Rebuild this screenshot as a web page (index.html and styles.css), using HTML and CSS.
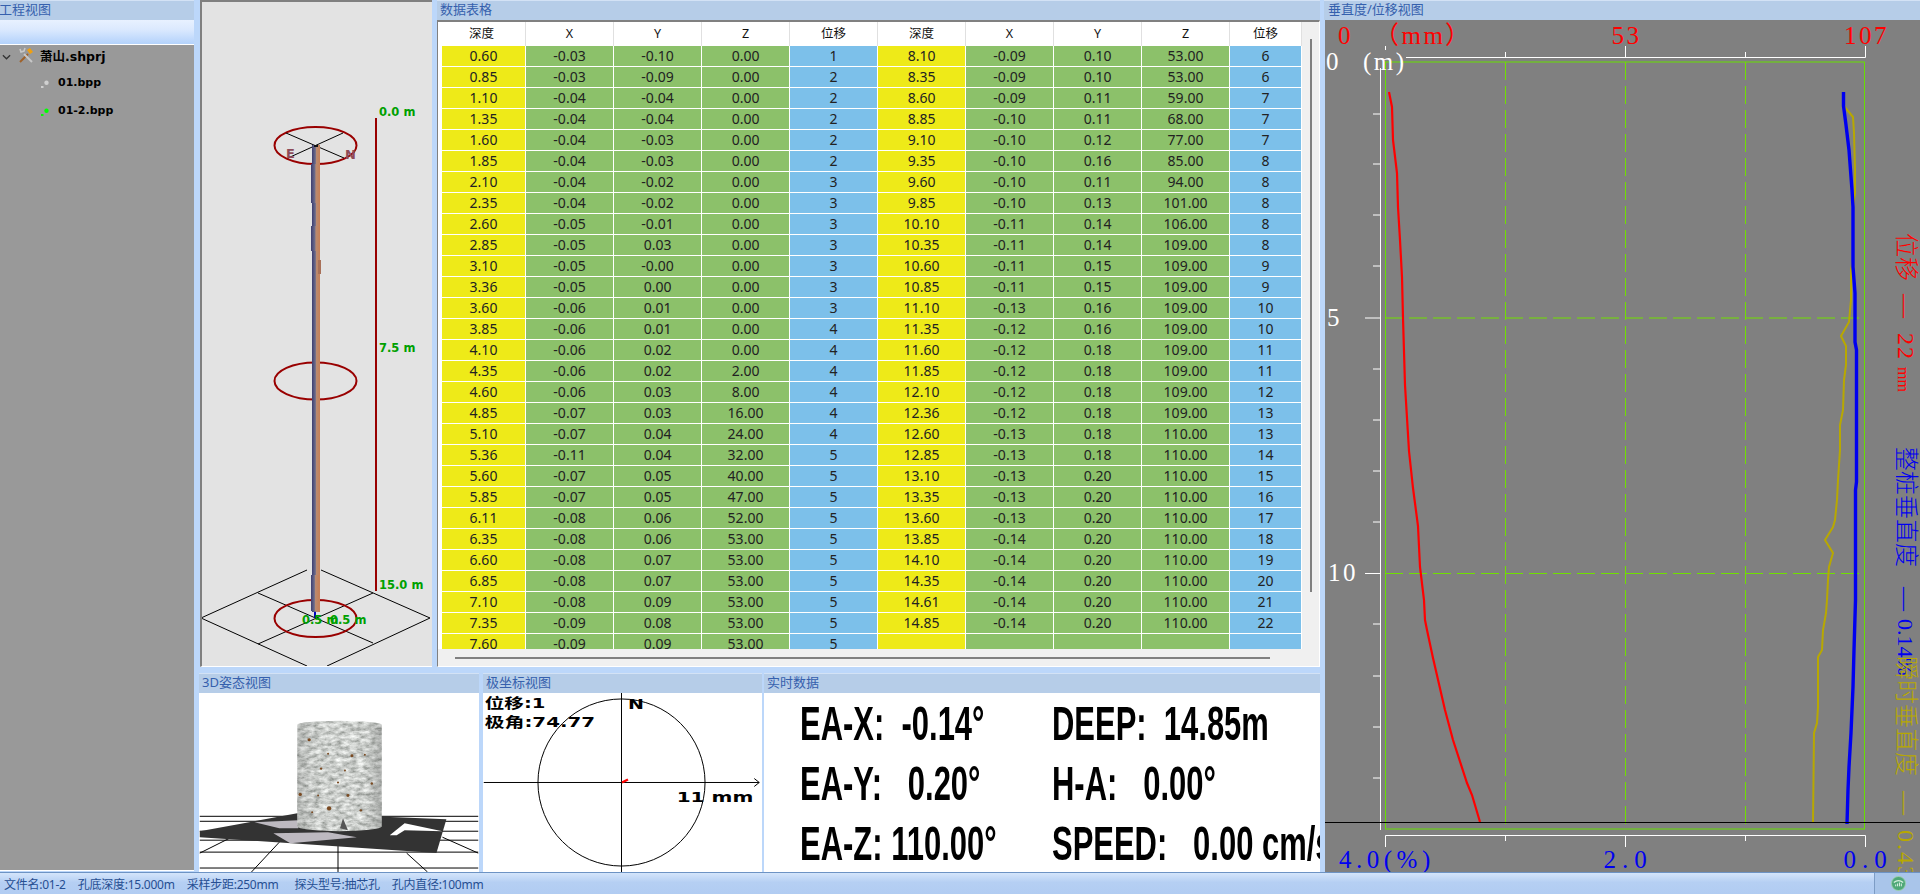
FILE: index.html
```html
<!DOCTYPE html>
<html lang="zh-CN">
<head>
<meta charset="utf-8">
<title>数据视图</title>
<link rel="stylesheet" href="styles.css">
</head>
<body>
<div class="app">
  <div class="workspace">
    <aside class="tree-panel">
      <div class="head tree-head">工程视图</div>
      <div class="toolbar"></div>
      <div class="tree">
        <div class="node root">
          <svg class="chev" viewBox="0 0 10 6"><path d="M1 1l4 4 4-4" fill="none" stroke="#333" stroke-width="1.4"/></svg>
          <svg class="tools" viewBox="0 0 16 16"><path d="M2 15L10 7" stroke="#a0622a" stroke-width="2"/><path d="M9 3l3-2 3 4-3 2z" fill="#f0a010"/><path d="M14 15L6 7" stroke="#c8c8c8" stroke-width="2"/><path d="M2 2l1 3 3-1 1-3" fill="none" stroke="#c8c8c8" stroke-width="1.6"/></svg>
          <span>萧山.shprj</span>
        </div>
        <div class="node leaf"><svg class="dot" viewBox="0 0 8 8"><circle cx="5.5" cy="2.8" r="2.2" fill="#d0d0d0"/><rect x="0" y="6" width="2.5" height="2" fill="#d0d0d0"/></svg><span>01.bpp</span></div>
        <div class="node leaf"><svg class="dot" viewBox="0 0 8 8"><circle cx="5.5" cy="2.8" r="2.2" fill="#0f0"/><rect x="0" y="6" width="2.5" height="2" fill="#0f0"/></svg><span>01-2.bpp</span></div>
      </div>
    </aside>

    <main class="center">
      <div class="top-row">
        <section class="pillar-panel">
          <svg class="pillar-svg" viewBox="202 2 230 665">
            <defs>
              <linearGradient id="pipe" x1="0" x2="1" y1="0" y2="0">
                <stop offset="0" stop-color="#3e3e70"/><stop offset=".42" stop-color="#6c6c8c"/><stop offset=".55" stop-color="#b98a70"/><stop offset="1" stop-color="#c67f58"/>
              </linearGradient>
            </defs>
            <g class="thin">
              <path d="M201 618L307 570M321 570L430 618L327 666M307 666L201 618"/>
              <path d="M258 593L373 643M373 593L258 644"/>
            </g>
            <ellipse class="ring" cx="315.5" cy="145.5" rx="41" ry="18.5"/>
            <ellipse class="ring" cx="315.5" cy="381" rx="41" ry="18.5"/>
            <ellipse class="ring" cx="315.5" cy="618.5" rx="41" ry="18.5"/>
            <g class="thin"><path d="M286 133L344 158M343 133L288 158"/></g>
            <text class="compass" x="286" y="158">E</text>
            <text class="compass" x="345" y="159">N</text>
            <rect x="312" y="145" width="8" height="467" fill="url(#pipe)"/>
            <rect x="311" y="164" width="9" height="28" fill="url(#pipe)"/>
            <rect x="311" y="192" width="9" height="11" fill="url(#pipe)"/>
            <rect x="311" y="226" width="9" height="25" fill="url(#pipe)"/>
            <rect x="318" y="260" width="3" height="14" fill="#a87058"/>
            <rect x="311" y="575" width="8" height="36" fill="url(#pipe)"/>
            <rect x="314" y="145" width="4" height="2" fill="#111"/>
            <rect x="314" y="612" width="2" height="6" fill="#0000c0"/>
            <line class="scale" x1="376" y1="118" x2="376" y2="591"/>
            <text class="mark" x="379" y="116">0.0 m</text>
            <text class="mark" x="379" y="352">7.5 m</text>
            <text class="mark" x="379" y="589">15.0 m</text>
            <text class="mark" x="302" y="624">0.5 m</text>
            <text class="mark" x="330" y="624">0.5 m</text>
          </svg>
        </section>

        <section class="table-panel">
          <div class="head">数据表格</div>
          <div class="table-body">
            <div class="table-row-wrap">
              <div class="table-clip">
                <table class="data">
                  <colgroup><col class="c-strip"><col class="c-first"><col class="c-std" span="8"><col class="c-last"></colgroup>
                  <thead><tr><th colspan="2">深度</th><th>X</th><th>Y</th><th>Z</th><th>位移</th><th>深度</th><th>X</th><th>Y</th><th>Z</th><th>位移</th></tr></thead>
                  <tbody>
<tr><th></th><td>0.60</td><td>-0.03</td><td>-0.10</td><td>0.00</td><td>1</td><td>8.10</td><td>-0.09</td><td>0.10</td><td>53.00</td><td>6</td></tr>
<tr><th></th><td>0.85</td><td>-0.03</td><td>-0.09</td><td>0.00</td><td>2</td><td>8.35</td><td>-0.09</td><td>0.10</td><td>53.00</td><td>6</td></tr>
<tr><th></th><td>1.10</td><td>-0.04</td><td>-0.04</td><td>0.00</td><td>2</td><td>8.60</td><td>-0.09</td><td>0.11</td><td>59.00</td><td>7</td></tr>
<tr><th></th><td>1.35</td><td>-0.04</td><td>-0.04</td><td>0.00</td><td>2</td><td>8.85</td><td>-0.10</td><td>0.11</td><td>68.00</td><td>7</td></tr>
<tr><th></th><td>1.60</td><td>-0.04</td><td>-0.03</td><td>0.00</td><td>2</td><td>9.10</td><td>-0.10</td><td>0.12</td><td>77.00</td><td>7</td></tr>
<tr><th></th><td>1.85</td><td>-0.04</td><td>-0.03</td><td>0.00</td><td>2</td><td>9.35</td><td>-0.10</td><td>0.16</td><td>85.00</td><td>8</td></tr>
<tr><th></th><td>2.10</td><td>-0.04</td><td>-0.02</td><td>0.00</td><td>3</td><td>9.60</td><td>-0.10</td><td>0.11</td><td>94.00</td><td>8</td></tr>
<tr><th></th><td>2.35</td><td>-0.04</td><td>-0.02</td><td>0.00</td><td>3</td><td>9.85</td><td>-0.10</td><td>0.13</td><td>101.00</td><td>8</td></tr>
<tr><th></th><td>2.60</td><td>-0.05</td><td>-0.01</td><td>0.00</td><td>3</td><td>10.10</td><td>-0.11</td><td>0.14</td><td>106.00</td><td>8</td></tr>
<tr><th></th><td>2.85</td><td>-0.05</td><td>0.03</td><td>0.00</td><td>3</td><td>10.35</td><td>-0.11</td><td>0.14</td><td>109.00</td><td>8</td></tr>
<tr><th></th><td>3.10</td><td>-0.05</td><td>-0.00</td><td>0.00</td><td>3</td><td>10.60</td><td>-0.11</td><td>0.15</td><td>109.00</td><td>9</td></tr>
<tr><th></th><td>3.36</td><td>-0.05</td><td>0.00</td><td>0.00</td><td>3</td><td>10.85</td><td>-0.11</td><td>0.15</td><td>109.00</td><td>9</td></tr>
<tr><th></th><td>3.60</td><td>-0.06</td><td>0.01</td><td>0.00</td><td>3</td><td>11.10</td><td>-0.13</td><td>0.16</td><td>109.00</td><td>10</td></tr>
<tr><th></th><td>3.85</td><td>-0.06</td><td>0.01</td><td>0.00</td><td>4</td><td>11.35</td><td>-0.12</td><td>0.16</td><td>109.00</td><td>10</td></tr>
<tr><th></th><td>4.10</td><td>-0.06</td><td>0.02</td><td>0.00</td><td>4</td><td>11.60</td><td>-0.12</td><td>0.18</td><td>109.00</td><td>11</td></tr>
<tr><th></th><td>4.35</td><td>-0.06</td><td>0.02</td><td>2.00</td><td>4</td><td>11.85</td><td>-0.12</td><td>0.18</td><td>109.00</td><td>11</td></tr>
<tr><th></th><td>4.60</td><td>-0.06</td><td>0.03</td><td>8.00</td><td>4</td><td>12.10</td><td>-0.12</td><td>0.18</td><td>109.00</td><td>12</td></tr>
<tr><th></th><td>4.85</td><td>-0.07</td><td>0.03</td><td>16.00</td><td>4</td><td>12.36</td><td>-0.12</td><td>0.18</td><td>109.00</td><td>13</td></tr>
<tr><th></th><td>5.10</td><td>-0.07</td><td>0.04</td><td>24.00</td><td>4</td><td>12.60</td><td>-0.13</td><td>0.18</td><td>110.00</td><td>13</td></tr>
<tr><th></th><td>5.36</td><td>-0.11</td><td>0.04</td><td>32.00</td><td>5</td><td>12.85</td><td>-0.13</td><td>0.18</td><td>110.00</td><td>14</td></tr>
<tr><th></th><td>5.60</td><td>-0.07</td><td>0.05</td><td>40.00</td><td>5</td><td>13.10</td><td>-0.13</td><td>0.20</td><td>110.00</td><td>15</td></tr>
<tr><th></th><td>5.85</td><td>-0.07</td><td>0.05</td><td>47.00</td><td>5</td><td>13.35</td><td>-0.13</td><td>0.20</td><td>110.00</td><td>16</td></tr>
<tr><th></th><td>6.11</td><td>-0.08</td><td>0.06</td><td>52.00</td><td>5</td><td>13.60</td><td>-0.13</td><td>0.20</td><td>110.00</td><td>17</td></tr>
<tr><th></th><td>6.35</td><td>-0.08</td><td>0.06</td><td>53.00</td><td>5</td><td>13.85</td><td>-0.14</td><td>0.20</td><td>110.00</td><td>18</td></tr>
<tr><th></th><td>6.60</td><td>-0.08</td><td>0.07</td><td>53.00</td><td>5</td><td>14.10</td><td>-0.14</td><td>0.20</td><td>110.00</td><td>19</td></tr>
<tr><th></th><td>6.85</td><td>-0.08</td><td>0.07</td><td>53.00</td><td>5</td><td>14.35</td><td>-0.14</td><td>0.20</td><td>110.00</td><td>20</td></tr>
<tr><th></th><td>7.10</td><td>-0.08</td><td>0.09</td><td>53.00</td><td>5</td><td>14.61</td><td>-0.14</td><td>0.20</td><td>110.00</td><td>21</td></tr>
<tr><th></th><td>7.35</td><td>-0.09</td><td>0.08</td><td>53.00</td><td>5</td><td>14.85</td><td>-0.14</td><td>0.20</td><td>110.00</td><td>22</td></tr>
<tr><th></th><td>7.60</td><td>-0.09</td><td>0.09</td><td>53.00</td><td>5</td><td></td><td></td><td></td><td></td><td></td></tr>
                  </tbody>
                </table>
              </div>
              <div class="vscroll"><div class="vthumb"></div></div>
            </div>
            <div class="hscroll"><div class="hthumb"></div></div>
          </div>
        </section>
      </div>

      <div class="bottom-row">
        <section class="view view-3d">
          <div class="head">3D姿态视图</div>
          <svg class="canvas" viewBox="199 692 280 180">
            <defs>
              <filter id="stone" x="0" y="0" width="100%" height="100%">
                <feTurbulence type="fractalNoise" baseFrequency="0.14 0.26" numOctaves="4" seed="11"/>
                <feColorMatrix values=".95 0 0 0 .13  .95 0 0 0 .15  .95 0 0 0 .13  0 0 0 0 1"/>
                <feComposite in2="SourceGraphic" operator="in"/>
              </filter>
              <linearGradient id="shade" x1="0" x2="1" y1="0" y2="0">
                <stop offset="0" stop-color="#000" stop-opacity=".12"/><stop offset=".25" stop-color="#000" stop-opacity="0"/><stop offset=".8" stop-color="#000" stop-opacity="0"/><stop offset="1" stop-color="#000" stop-opacity=".18"/>
              </linearGradient>
            </defs>
            <g class="gridline">
              <path d="M199 816H479M199 821H479M199 831H479M199 840H479M199 852H479M199 868H479M338 840V872"/>
              <path d="M199 853L229 838M251 872L279 842M407 853L428 872M443 837L479 853"/>
            </g>
            <path d="M297 813L447 819L437 853L199 837V831Z" fill="#333"/>
            <path d="M254 822L298 820V828H279Z" fill="#bdb9c0"/>
            <path d="M273 833L328 832L357 837L290 843Z" fill="#bdb9c0"/>
            <path d="M390 835L405 823L443 831L405 830L397 835Z" fill="#fff"/>
            <path d="M297 724A42.5 4 0 0 1 382 724V826A42.5 5 0 0 1 297 826Z" fill="#fff" filter="url(#stone)"/>
            <path d="M297 724A42.5 4 0 0 1 382 724V826A42.5 5 0 0 1 297 826Z" fill="url(#shade)"/>
            <g class="specks">
              <circle cx="309" cy="739" r="1.6"/><circle cx="321" cy="768" r="1.2"/><circle cx="352" cy="755" r="1.5"/><circle cx="329" cy="808" r="2.2"/><circle cx="348" cy="795" r="1.5"/><circle cx="372" cy="783" r="1.2"/><circle cx="300" cy="794" r="1.7"/><circle cx="318" cy="795" r="1"/><circle cx="345" cy="770" r="1"/><circle cx="365" cy="754" r="1"/><circle cx="361" cy="810" r="1.2"/><circle cx="328" cy="753" r="1"/><circle cx="338" cy="782" r="1.1"/><circle cx="312" cy="812" r="1"/>
            </g>
            <path d="M343 818L348 830L340 828Z" fill="#555"/>
          </svg>
        </section>

        <section class="view view-polar">
          <div class="head">极坐标视图</div>
          <svg class="canvas" viewBox="483 692 279 180">
            <circle class="polar" cx="621.5" cy="782" r="84"/>
            <path class="polar" d="M483 782H760M755 778L760 782L755 786M621.5 692V872"/>
            <path d="M622 782L628 779" stroke="#f00" stroke-width="2.4"/>
            <text class="polar-text" x="484" y="707" textLength="61" lengthAdjust="spacingAndGlyphs">位移:1</text>
            <text class="polar-text" x="484" y="726" textLength="111" lengthAdjust="spacingAndGlyphs">极角:74.77</text>
            <text class="polar-text" x="628" y="708" textLength="16" lengthAdjust="spacingAndGlyphs">N</text>
            <text class="polar-text" x="677" y="802" textLength="77" lengthAdjust="spacingAndGlyphs">11 mm</text>
          </svg>
        </section>

        <section class="view view-live">
          <div class="head">实时数据</div>
          <div class="live">
            <div class="live-cell">EA-X:  -0.14°</div><div class="live-cell">DEEP:  14.85m</div>
            <div class="live-cell">EA-Y:   0.20°</div><div class="live-cell">H-A:   0.00°</div>
            <div class="live-cell">EA-Z: 110.00°</div><div class="live-cell">SPEED:   0.00 cm/s</div>
          </div>
        </section>
      </div>
    </main>

    <section class="chart-panel">
      <div class="head">垂直度/位移视图</div>
      <svg class="chart" viewBox="1325 20 595 853">
        <rect class="frame" x="1385.5" y="62" width="479" height="767"/>
        <path class="dash" d="M1505.5 62V824M1625.5 62V824M1745.5 62V824M1385 318H1860M1385 573.5H1860"/>
        <path class="axis" d="M1406 57.5H1865.5V46M1625.5 57.5V46M1505.5 57.5V52M1745.5 57.5V52M1385.5 46V50"/>
        <path class="axis" d="M1385.5 847V835.5H1865.5V847M1625.5 835.5V847M1505.5 835.5V841M1745.5 835.5V841"/>
        <path class="axis" d="M1380.5 68V830"/>
        <path class="axis" d="M1365 318H1381M1365 573.5H1381M1373 114H1381M1373 164H1381M1373 215H1381M1373 266H1381M1373 369H1381M1373 420H1381M1373 471H1381M1373 522H1381M1373 624H1381M1373 676H1381M1373 727H1381M1373 778H1381"/>
        <path class="line-y" d="M1843 92L1843 105L1853 117L1854 133L1855 170L1855 193L1853 207L1853 260L1851 270L1851 300L1849 322L1841 336L1846 346L1846 365L1844 380L1843 410L1840 425L1840 450L1838 480L1837 500L1835 520L1833 527L1825 540L1833 553L1829 567L1828 580L1827 600L1826 613L1823 630L1822 650L1818 657L1818 707L1817 723L1814 733L1813 822"/>
        <path class="line-b" d="M1843.5 92V106L1846 125L1849 150L1852 190L1853 207L1853 233L1853 267L1855 293V342L1856.5 350V482L1855.5 490V600L1854 650L1853 687L1851 733L1849 767L1848 790L1847 824"/>
        <path class="line-r" d="M1389 92L1392 107L1393 140L1397 173L1398 207L1400 240L1402 277L1403 318L1405 385L1407 418L1409 451L1413 488L1418 526L1420 567L1424 600L1425 620L1427 630L1433 658L1445 710L1453 740L1467 783L1472 795L1480 822"/>
        <line class="base" x1="1325" y1="822.5" x2="1920" y2="822.5"/>
        <text class="lab red" x="1338" y="44">0</text>
        <text class="lab red" x="1374" y="44">（mm）</text>
        <text class="lab red mid" x="1626.5" y="44">53</text>
        <text class="lab red mid" x="1866.5" y="44">107</text>
        <text class="lab white" x="1326" y="70">0</text>
        <text class="lab white" x="1363" y="70">(m)</text>
        <text class="lab white" x="1327" y="326">5</text>
        <text class="lab white" x="1328" y="581">10</text>
        <text class="lab blue spaced" x="1339" y="868">4.0(%)</text>
        <text class="lab blue mid wider" x="1628" y="868">2.0</text>
        <text class="lab blue mid wider" x="1868" y="868">0.0</text>
        <text class="side red-f" transform="translate(1898 233) rotate(90)">位移<tspan dx="13">—</tspan><tspan class="num" dx="15">22</tspan><tspan class="unit" dx="6">mm</tspan></text>
        <text class="side blue-f" transform="translate(1898 447) rotate(90)">整桩垂直度<tspan dx="20">—</tspan><tspan class="pct" dx="8">0.14%</tspan></text>
        <text class="side yellow-f" transform="translate(1898 656) rotate(90)">瞬时垂直度<tspan dx="15">—</tspan><tspan class="num" dx="15">0.43</tspan></text>
      </svg>
    </section>
  </div>

  <footer class="status">
    <div class="status-left">
      <span>文件名:01-2</span><span>孔底深度:15.000m</span><span>采样步距:250mm</span><span class="wide">探头型号:抽芯孔</span><span>孔内直径:100mm</span>
    </div>
    <div class="status-right">
      <svg class="globe" viewBox="0 0 16 16"><circle cx="8" cy="8" r="7.5" fill="#4fa878"/><circle cx="8" cy="8" r="7.5" fill="none" stroke="#9fd0b0"/><path d="M3 7Q8 3 13 7" fill="none" stroke="#d5efdd" stroke-width="1.4"/><path d="M5 11v-2M7 11V8M9 11V7M11 11V8" stroke="#e8f5ec"/></svg>
    </div>
  </footer>
</div>
</body>
</html>
```
FILE: styles.css
```css
* { box-sizing: border-box; }
html, body { margin: 0; padding: 0; }
body {
  width: 1920px;
  height: 894px;
  overflow: hidden;
  background: #bcd7fa;
  font-family: "Noto Sans", "Noto Sans CJK SC", sans-serif;
}
.app { display: flex; flex-direction: column; height: 894px; }
.workspace { display: flex; height: 872px; }

.head {
  height: 20px;
  line-height: 17px;
  padding-left: 3px;
  background: #b6cde8;
  border-top: 1px solid #d3e2f5;
  color: #3560ad;
  font-size: 13px;
  white-space: nowrap;
  overflow: hidden;
}

/* left tree */
.tree-panel { width: 194px; flex: none; display: flex; flex-direction: column; height: 872px; }
.tree-head { padding-left: 0; text-indent: -1px; }
.toolbar { background: linear-gradient(#e8f1ff, #dbe9fe 40%, #b3d2fb); border-bottom: 1px solid #fff; height: 25px; }
.tree {
  flex: 1;
  background: #999;
  border-bottom: 1px solid #fff;
  margin-bottom: 1px;
  font-family: "DejaVu Sans", "Noto Sans CJK SC", sans-serif;
  font-weight: 700;
  font-size: 11px;
  color: #000;
}
.node { display: flex; align-items: center; height: 28px; }
.root { height: 20px; margin-bottom: 3px; padding-left: 2px; font-size: 12.5px; }
.leaf { padding-left: 41px; }
.chev { width: 9px; height: 6px; margin-top: 4px; flex: none; }
.tools { width: 16px; height: 16px; margin: 0 6px 0 7px; flex: none; }
.dot { width: 8px; height: 8px; margin-top: 3px; margin-right: 9px; flex: none; }

/* centre */
.center { width: 1126px; margin-left: 5px; flex: none; display: flex; flex-direction: column; }
.top-row { display: flex; height: 667px; padding-left: 1px; }
.pillar-panel {
  width: 232px;
  height: 667px;
  flex: none;
  background: #e3e3e3;
  border-left: 2px solid #808080;
  border-top: 2px solid #808080;
  border-bottom: 1px solid #fff;
  overflow: hidden;
}
.pillar-svg { display: block; width: 230px; height: 665px; }
.thin path { fill: none; stroke: #000; stroke-width: 1; }
.ring { fill: none; stroke: #990000; stroke-width: 2; }
.scale { stroke: #990000; stroke-width: 2; }
.compass { fill: #8e4b58; font: 700 13px "DejaVu Sans", sans-serif; }
.mark { fill: #00a000; font: 700 11.5px "DejaVu Sans", sans-serif; }

.table-panel { width: 883px; margin-left: 5px; flex: none; display: flex; flex-direction: column; height: 667px; }
.table-body {
  flex: 1;
  min-height: 0;
  display: flex;
  flex-direction: column;
  background: #f0f0f0;
  border-top: 2px solid #808080;
  border-left: 1px solid #808080;
  border-right: 1px solid #fff;
  border-bottom: 1px solid #fff;
}
.table-row-wrap { display: flex; height: 627px; flex: none; }
.table-clip { width: 864px; flex: none; overflow: hidden; }
.data {
  table-layout: fixed;
  border-collapse: separate;
  border-spacing: 0;
  width: 864px;
  font-size: 14px;
  color: #222;
  text-align: center;
}
.c-strip { width: 4px; }
.c-first { width: 84px; }
.c-std { width: 88px; }
.c-last { width: 72px; }
.data thead th {
  height: 24px;
  padding: 0;
  background: #fff;
  border-right: 1px solid #e0e0e0;
  font-weight: 400;
  font-size: 12.5px;
  color: #111;
  line-height: 22px;
}
.data tbody th { padding: 0; background: #fff; }
.data td {
  height: 21px;
  padding: 0;
  line-height: 20px;
  background: #8cc16a;
  border-right: 1px solid #fff;
  border-bottom: 1px solid #fff;
}
.data td:nth-child(2), .data td:nth-child(7) { background: #eeea18; }
.data td:nth-child(6), .data td:nth-child(11) { background: #7cc0ea; }
.vscroll { flex: 1; }
.vthumb { width: 2px; height: 553px; margin: 17px 0 0 8px; background: #808080; }
.hscroll { flex: 1; }
.hthumb { height: 2px; width: 815px; margin: 8px 0 0 17px; background: #808080; }

.bottom-row { display: flex; margin-top: 6px; height: 199px; }
.view { display: flex; flex-direction: column; flex: none; }
.view-3d { width: 280px; }
.view-polar { width: 279px; margin-left: 4px; }
.view-live { width: 556px; margin-left: 2px; }
.canvas { display: block; width: 100%; height: 179px; background: #fff; }
.gridline path { fill: none; stroke: #000; stroke-width: 1; }
.specks circle { fill: #7a4a22; }
.polar { fill: none; stroke: #000; stroke-width: 1; }
.polar-text { fill: #000; font: 700 14px "DejaVu Sans", "Noto Sans CJK SC", sans-serif; }

.live {
  flex: 1;
  overflow: hidden;
  background: #fff;
  display: grid;
  grid-template-columns: 252px 267px;
  grid-auto-rows: 60px;
  padding-left: 36px;
  align-content: start;
}
.live-cell {
  font: 700 49px/60px "Liberation Sans", sans-serif;
  color: #000;
  white-space: pre;
  transform: scaleX(.632);
  transform-origin: left center;
  min-width: 0;
}

/* right chart */
.chart-panel { flex: 1; min-width: 0; display: flex; flex-direction: column; height: 873px; }
.chart-panel .head { margin-left: -1px; padding-left: 4px; }
.chart { display: block; width: 595px; height: 853px; background: #808080; }
.frame { fill: none; stroke: #66e000; stroke-width: 1; }
.dash { fill: none; stroke: #70e000; stroke-width: 1; stroke-dasharray: 18 6; }
.axis { fill: none; stroke: #fff; stroke-width: 1; }
.base { stroke: #000; stroke-width: 1; }
.line-r { fill: none; stroke: #f00; stroke-width: 2.2; }
.line-b { fill: none; stroke: #0000f0; stroke-width: 3.4; }
.line-y { fill: none; stroke: #b8a800; stroke-width: 2; }
.lab { font: 400 25px "Liberation Serif", serif; letter-spacing: 2.5px; }
.lab.spaced { letter-spacing: 4.5px; }
.lab.wider { letter-spacing: 6px; }
.mid { text-anchor: middle; }
.red { fill: #f00; }
.white { fill: #fff; }
.blue { fill: #0000f0; }
.side { font: 300 24px "Liberation Serif", "Noto Sans CJK SC", serif; }
.side .num { letter-spacing: 2px; }
.side .pct { font-size: 22px; }
.side .unit { font-size: 16px; }
.red-f { fill: #f00; }
.blue-f { fill: #0000f0; }
.yellow-f { fill: #b8a800; }

/* status */
.status {
  height: 22px;
  display: flex;
  background: linear-gradient(#d4e5fb, #b5cff3 45%, #b1ccf2);
  border-top: 1px solid #6d93c4;
  font-size: 12px;
  letter-spacing: -.25px;
  color: #264e92;
}
.status-left { flex: 1; display: flex; gap: 12px; padding-left: 4px; align-items: center; white-space: nowrap; }
.status-left .wide { margin-left: 4px; }
.status-right {
  width: 46px;
  flex: none;
  display: flex;
  align-items: center;
  padding-left: 16px;
  border-left: 1px solid #7d9cc5;
  background: #a9c5ea;
}
.globe { width: 15px; height: 15px; }
```
